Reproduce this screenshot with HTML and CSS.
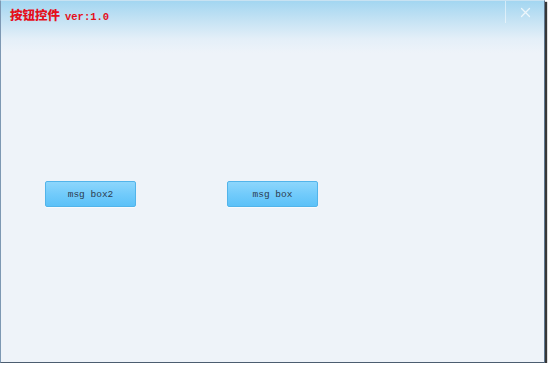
FILE: index.html
```html
<!DOCTYPE html>
<html>
<head>
<meta charset="utf-8">
<link rel="stylesheet" href="styles.css">
</head>
<body>
<div class="window">
  <div class="titlebar">
    <span class="title-cn">按钮控件</span>
    <span class="title-ver">ver:1.0</span>
  </div>
  <div class="close">
    <svg width="11" height="11" viewBox="0 0 11 11"><path d="M1.5 1.5 L9.5 9.5 M9.5 1.5 L1.5 9.5" stroke="#ffffff" stroke-width="1.3" stroke-linecap="round" opacity="0.75"/></svg>
  </div>
  <div class="content">
    <button class="btn">msg box2</button>
    <button class="btn">msg box</button>
  </div>
</div>
</body>
</html>
```
FILE: styles.css
```css
html, body {
  margin: 0;
  padding: 0;
  background: #ffffff;
}
.window {
  position: relative;
  width: 543px;
  height: 361px;
  border-left: 1px solid #7d98b3;
  border-top: 1px solid #c8e2f2;
  border-right: 1px solid #5f7890;
  border-bottom: 1px solid #4c5d70;
  background: linear-gradient(to bottom, #a3d6f1 0px, #c6e3f4 20px, #e4eff8 38px, #eef3f9 52px, #eef3f9 100%);
  box-shadow: 2px 2px 1px rgba(20, 20, 20, 0.85);
}
.titlebar {
  display: flex;
  align-items: baseline;
  gap: 5px;
  padding: 4px 0 0 9px;
  height: 20px;
}
.title-cn {
  font-family: "Noto Sans CJK SC", sans-serif;
  font-weight: 900;
  font-size: 12.5px;
  color: #e5101c;
}
.title-ver {
  font-family: "Liberation Mono", monospace;
  font-weight: bold;
  font-size: 10.5px;
  color: #e5101c;
}
.close {
  position: absolute;
  top: 0;
  right: 0;
  width: 38px;
  height: 22px;
  border-left: 1px solid rgba(255, 255, 255, 0.5);
  display: flex;
  align-items: center;
  justify-content: center;
}
.content {
  display: flex;
  gap: 91px;
  padding: 156px 0 0 44px;
}
.btn {
  width: 91px;
  height: 26px;
  margin: 0;
  padding: 0;
  border: 1px solid #52b4ea;
  border-radius: 2px;
  background: linear-gradient(to bottom, #8dd6fc 0%, #72cbfb 50%, #5cc1f8 100%);
  font-family: "Liberation Mono", monospace;
  font-size: 9.5px;
  color: #2c3c50;
  box-shadow: 0 1px 0 rgba(255,255,255,0.6);
}
```
